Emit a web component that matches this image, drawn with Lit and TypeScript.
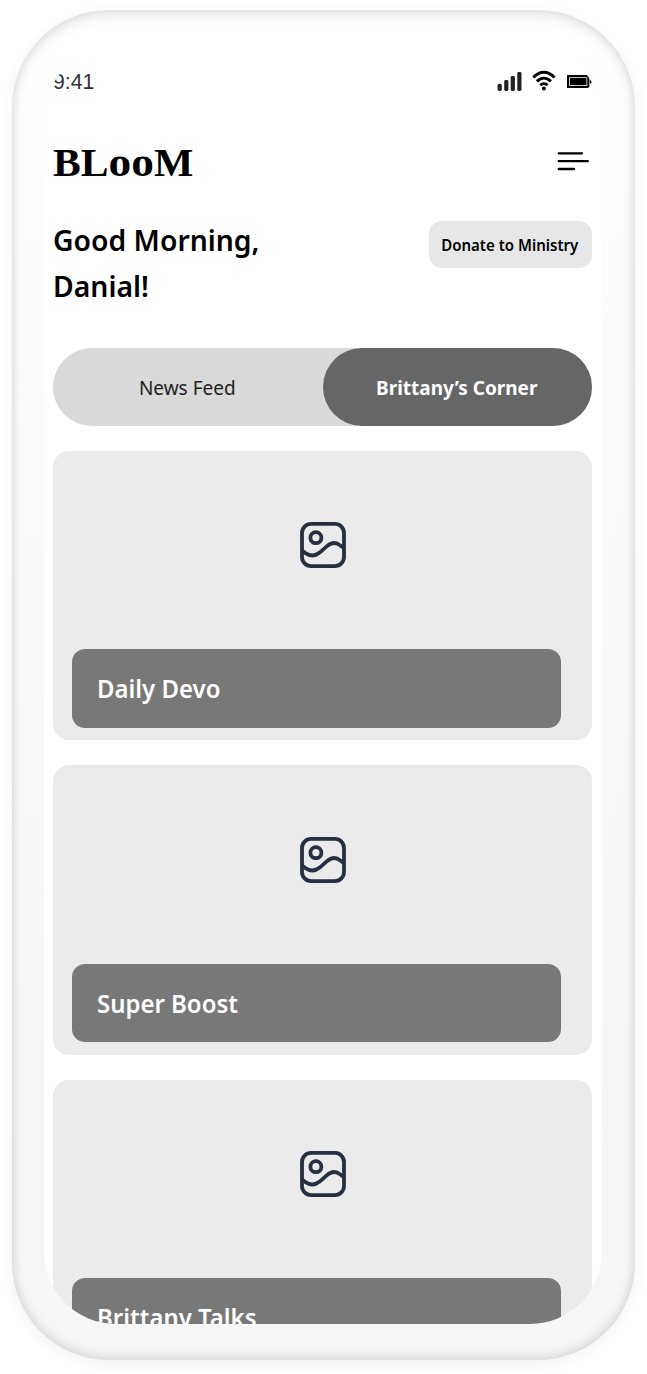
import { LitElement, html, css } from "lit";
import { customElement, property } from "lit/decorators.js";

@customElement("status-bar")
class StatusBar extends LitElement {
  static styles = css`
    :host { display: flex; justify-content: space-between; height: 24px; }
    .time { font: 22px/24px "Liberation Sans", Arial, sans-serif; color: #303235; }
    .label { display: inline-block; transform-origin: left; transform: scaleX(0.965); }
    svg { display: block; }
  `;
  render() {
    return html`
      <div class="time"><span class="label">9:41</span></div>
      <svg width="96" height="24" viewBox="496.2 70 96 24" fill="none">
        <g fill="#222">
          <rect x="497.8" y="83.7" width="4.2" height="7.2" rx="1.6" />
          <rect x="504.4" y="80" width="4.2" height="10.9" rx="1.4" />
          <rect x="510.9" y="76" width="4.2" height="14.9" rx="1.4" />
          <rect x="517.5" y="72" width="4.2" height="18.9" rx="1.4" />
        </g>
        <g stroke="#000" stroke-width="2.9">
          <path d="M533.5 77.5Q538.3 72.3 544.1 72.3T554.7 77.5" />
          <path d="M537.1 81.4Q540.4 78.1 544.1 78.1T551.1 81.4" />
          <path d="M540.4 85.100Q542.2 83.600 544.1 83.600T547.8 85.100" />
        </g>
        <circle cx="544.1" cy="88.6" r="2" fill="#000" />
        <path d="M567.200 75h21l1.400 1.400V86.700L588.200 88h-21z" fill="#000" />
        <rect x="569.6" y="77.6" width="17.4" height="7.900" stroke="#ddd" stroke-width="0.9" />
        <path d="M590.2 79.300q2 1 2 2.300t-2 2.300z" fill="#000" />
      </svg>
    `;
  }
}

@customElement("media-card")
class MediaCard extends LitElement {
  @property() label = "";
  static styles = css`
    :host {
      display: flex; flex-direction: column; align-items: flex-start; box-sizing: border-box;
      flex: none; height: 289.5px; padding: 70.500px 0 0 18.7px; background: #ebebeb; border-radius: 16px;
    }
    .picture { display: block; align-self: center; margin-left: -18px; }
    .caption {
      width: 489px; height: 78.5px; margin-top: 79.8px; padding-left: 25px; box-sizing: border-box;
      display: flex; align-items: center; background: #787878; border-radius: 13px;
      color: #fff; font: 600 25.200px/34px "Noto Sans", sans-serif;
    }
    .text { transform-origin: left; transform: scaleX(0.951); white-space: nowrap; }
  `;
  render() {
    return html`
      <svg class="picture" width="48" height="48" viewBox="0 0 48 48" fill="none" stroke="#263040" stroke-width="3.8">
        <rect x="3" y="2.900" width="42" height="42.200" rx="9" />
        <circle cx="16.900" cy="16.700" r="5.500" />
        <path d="M3 29.400l3.400 2.700q7.500 5 14.300-.5l7.300-6.500q7-6 13.500-.5l3.500 2.600" />
      </svg>
      <div class="caption"><span class="text">${this.label}</span></div>
    `;
  }
}

@customElement("app-root")
class AppRoot extends LitElement {
  static styles = css`
    :host { display: block; height: 1374px; box-sizing: border-box; padding: 10px 12px 14px; background: #fff;
      overflow: hidden; font-family: "Noto Sans", sans-serif; color: #000; }
    .device {
      width: 623px; height: 1350px; box-sizing: border-box; padding: 37px 33px 36px 32px;
      border-radius: 97px; background: linear-gradient(#fff, #fbfbfb 30%, #f6f6f6 85%);
      box-shadow: inset 0 8px 16px -4px rgba(0,0,0,.08), inset 0 -8px 16px -4px rgba(0,0,0,.05),
        inset 0 0 13px rgba(0,0,0,.12), 0 3px 14px rgba(0,0,0,.06);
    }
    .screen {
      height: 1277px; box-sizing: border-box; padding: 23px 10px 0 9px; overflow: hidden;
      border-radius: 72px; background: #fff; display: flex; flex-direction: column;
    }
    .brand { display: flex; justify-content: space-between; align-items: center; height: 44px; margin-top: 46px; }
    .logo { font: 700 39.500px/44px "Liberation Serif", serif; transform: scaleX(1.055); transform-origin: left; }
    .round { font-size: 43px; line-height: 1; }
    .menu { display: block; margin: 0 3px 2.500px 0; }
    .intro { display: flex; justify-content: space-between; align-items: flex-start; margin-top: 34px; height: 92px; }
    .hello { font-size: 28.300px; font-weight: 600; line-height: 45.700px; transform: translateY(-.4px) scaleX(1.001); transform-origin: left; white-space: nowrap; }
    .donate {
      margin-top: 3.200px; border: 0; padding: 0; width: 163.500px; height: 47px; border-radius: 13px;
      background: #e7e7e7; font: 600 15.700px/22px "Noto Sans", sans-serif; color: #000;
      display: flex; align-items: center; justify-content: center; flex: none;
    }
    .narrow { transform: translate(-.8px, -.3px) scaleX(.958); white-space: nowrap; }
    .tabs { flex: none; display: grid; grid-template-columns: 1fr 1fr; height: 78.500px; margin-top: 38.100px;
      border-radius: 40px; background: #d9d9d9; font-size: 19px; color: #222; }
    .tab { display: flex; align-items: center; justify-content: center; padding: 2px 1px 0 0; box-sizing: border-box; }
    .active { background: #666; color: #fff; font-weight: 700; border-radius: 40px; }
    .feed { display: flex; flex-direction: column; gap: 25px; margin-top: 24.900px; }
  `;
  render() {
    return html`
      <div class="device">
        <main class="screen">
          <status-bar></status-bar>
          <header class="brand">
            <div class="logo">BL<span class="round">oo</span>M</div>
            <svg class="menu" width="32" height="22" viewBox="0 0 32 22" stroke="#000" stroke-width="2.3" stroke-linecap="round">
              <path d="M1.700 3.300H25M1.700 11.200H30.800M1.700 19H17" />
            </svg>
          </header>
          <section class="intro">
            <div class="hello">Good Morning,<br />Danial!</div>
            <button class="donate"><span class="narrow">Donate to Ministry</span></button>
          </section>
          <nav class="tabs">
            <div class="tab">News Feed</div>
            <div class="tab active">Brittany’s Corner</div>
          </nav>
          <section class="feed">
            ${["Daily Devo", "Super Boost", "Brittany Talks"].map((t) => html`<media-card .label=${t}></media-card>`)}
          </section>
        </main>
      </div>
    `;
  }
}
